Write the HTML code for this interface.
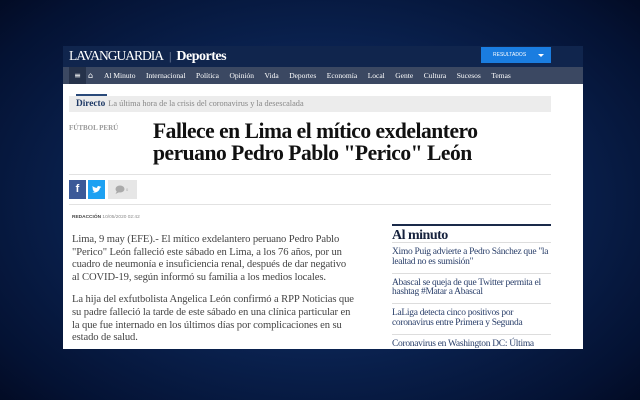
<!DOCTYPE html>
<html><head><meta charset="utf-8"><style>
*{margin:0;padding:0;box-sizing:border-box}
body{width:640px;height:400px;overflow:hidden;background:radial-gradient(ellipse 70% 75% at 50% 50%,#123468 0%,#0a2250 50%,#041233 85%,#020a22 100%);font-family:"Liberation Serif",serif;position:relative}
.pg{position:absolute;left:63px;top:46px;width:520px;height:303px;background:#fff;overflow:hidden}
.hd{position:absolute;left:0;top:0;width:520px;height:21px;background:#10254d}
.logo{position:absolute;left:6px;top:2px;color:#fff;font-size:13.5px;letter-spacing:-1px;white-space:nowrap}
.logo b{letter-spacing:-0.5px;font-size:14px}
.logo span{color:#8a97b0;margin:0 6px;font-size:12px}
.res{position:absolute;left:418px;top:1px;width:70px;height:16px;background:#1a7de0;color:#fff;font-family:"Liberation Sans",sans-serif;font-size:5px;line-height:16px;padding-left:12px}
.res:after{content:"";position:absolute;right:7px;top:7px;border:3px solid transparent;border-top:3px solid #fff}
.nav{position:absolute;left:0;top:21px;width:520px;height:17px;background:#3b4862;color:#fff;font-size:7.5px;line-height:17px;white-space:nowrap}
.nav .m{position:absolute;left:6px;top:0;width:17px;height:17px;background:#26324a;text-align:center;font-family:"DejaVu Sans";font-size:8px}
.nav .hm{position:absolute;left:25px;top:0;font-family:"DejaVu Sans";font-size:8px}
.nav .it{position:absolute;left:41px;top:0}
.nav .it i{font-style:normal;margin-right:10.5px}
.dir{position:absolute;left:6px;top:48px;width:482px;height:18px;background:#ececec;border-top:2px solid #fff;font-size:8.3px;line-height:16px;color:#888;padding-left:7px;white-space:nowrap}
.dir:before{content:"";position:absolute;left:7px;top:-2px;width:31px;height:2px;background:#2a4a7a}
.dir b{color:#1f3a66;font-size:9.3px;margin-right:3px}
.cat{position:absolute;left:6px;top:78px;font-size:7px;color:#999;font-weight:bold}
.h1{position:absolute;left:90px;top:74px;font-size:22px;line-height:22px;color:#111;font-weight:bold;letter-spacing:-0.5px;transform:scaleX(0.98);transform-origin:left;white-space:nowrap}
.ln{position:absolute;left:6px;height:1px;width:482px;background:#e2e2e2}
.fb,.tw,.cm{position:absolute;top:134px;height:19px}
.fb{left:6px;width:17px;background:#3b5998;color:#fff;font-family:"Liberation Sans";font-weight:bold;font-size:11px;text-align:center;line-height:19px}
.tw{left:25px;width:17px;background:#1da1f2}
.cm{left:45px;width:29px;background:#e6e6e6}
.red{position:absolute;left:9px;top:169px;font-family:"Liberation Sans";font-size:4.8px;color:#888}
.red b{color:#444}
.body{position:absolute;left:9px;top:188px;width:282px;font-size:10.6px;line-height:12.7px;color:#444;letter-spacing:-0.1px}
.body p{margin-bottom:9.5px}
.side{position:absolute;left:329px;top:178px;width:159px}
.side .t{border-top:2px solid #1a2a4a;padding-top:2px;font-size:14px;font-weight:bold;color:#16223d;height:19px;border-bottom:1px solid #ddd;letter-spacing:-0.5px}
.side .i{font-size:9.5px;line-height:9.8px;color:#2a3f6a;padding:5px 0 5px;border-bottom:1px solid #ddd;letter-spacing:-0.3px}
</style></head><body>
<div class="pg">
<div class="hd"><div class="logo">LAVANGUARDIA<span>|</span><b>Deportes</b></div><div class="res">RESULTADOS</div></div>
<div class="nav"><div class="m">≡</div><div class="hm">⌂</div><div class="it"><i>Al Minuto</i><i>Internacional</i><i>Política</i><i>Opinión</i><i>Vida</i><i>Deportes</i><i>Economía</i><i>Local</i><i>Gente</i><i>Cultura</i><i>Sucesos</i><i>Temas</i></div></div>
<div class="dir"><b>Directo</b>La última hora de la crisis del coronavirus y la desescalada</div>
<div class="cat">FÚTBOL PERÚ</div>
<div class="h1">Fallece en Lima el mítico exdelantero<br>peruano Pedro Pablo "Perico" León</div>
<div class="ln" style="top:128px"></div>
<div class="fb">f</div>
<div class="tw"><svg width="17" height="19" viewBox="0 0 17 19"><path d="M4 12c3 1.5 7 0 8-4l1.5-1-1.2.2.9-1-1.3.4c-1-1.1-3-.5-2.8 1.3C7 7.8 5.5 7 4.6 6c-.4 1 0 2 .7 2.4H4.5c0 1 .7 1.600 1.4 1.8H5c.3.8 1 1.2 1.8 1.2C6 12 5 12.2 4 12z" fill="#fff"/></svg></div>
<div class="cm"><svg width="29" height="19"><ellipse cx="12" cy="9" rx="4.5" ry="3.5" fill="#aaa"/><path d="M9 11l-1.5 3 4-2z" fill="#aaa"/><text x="18" y="11" font-size="4" fill="#aaa" font-family="Liberation Sans">0</text></svg></div>
<div class="ln" style="top:158px"></div>
<div class="red"><b>REDACCIÓN</b> 10/05/2020 02:42</div>
<div class="body"><p>Lima, 9 may (EFE).- El mítico exdelantero peruano Pedro Pablo "Perico" León falleció este sábado en Lima, a los 76 años, por un cuadro de neumonía e insuficiencia renal, después de dar negativo al COVID-19, según informó su familia a los medios locales.</p><p>La hija del exfutbolista Angelica León confirmó a RPP Noticias que su padre falleció la tarde de este sábado en una clínica particular en la que fue internado en los últimos días por complicaciones en su estado de salud.</p></div>
<div class="side"><div class="t">Al minuto</div>
<div class="i">Ximo Puig advierte a Pedro Sánchez que "la lealtad no es sumisión"</div>
<div class="i">Abascal se queja de que Twitter permita el hashtag #Matar a Abascal</div>
<div class="i">LaLiga detecta cinco positivos por coronavirus entre Primera y Segunda</div>
<div class="i">Coronavirus en Washington DC: Última hora de la crisis</div></div>
</div>
</body></html>
